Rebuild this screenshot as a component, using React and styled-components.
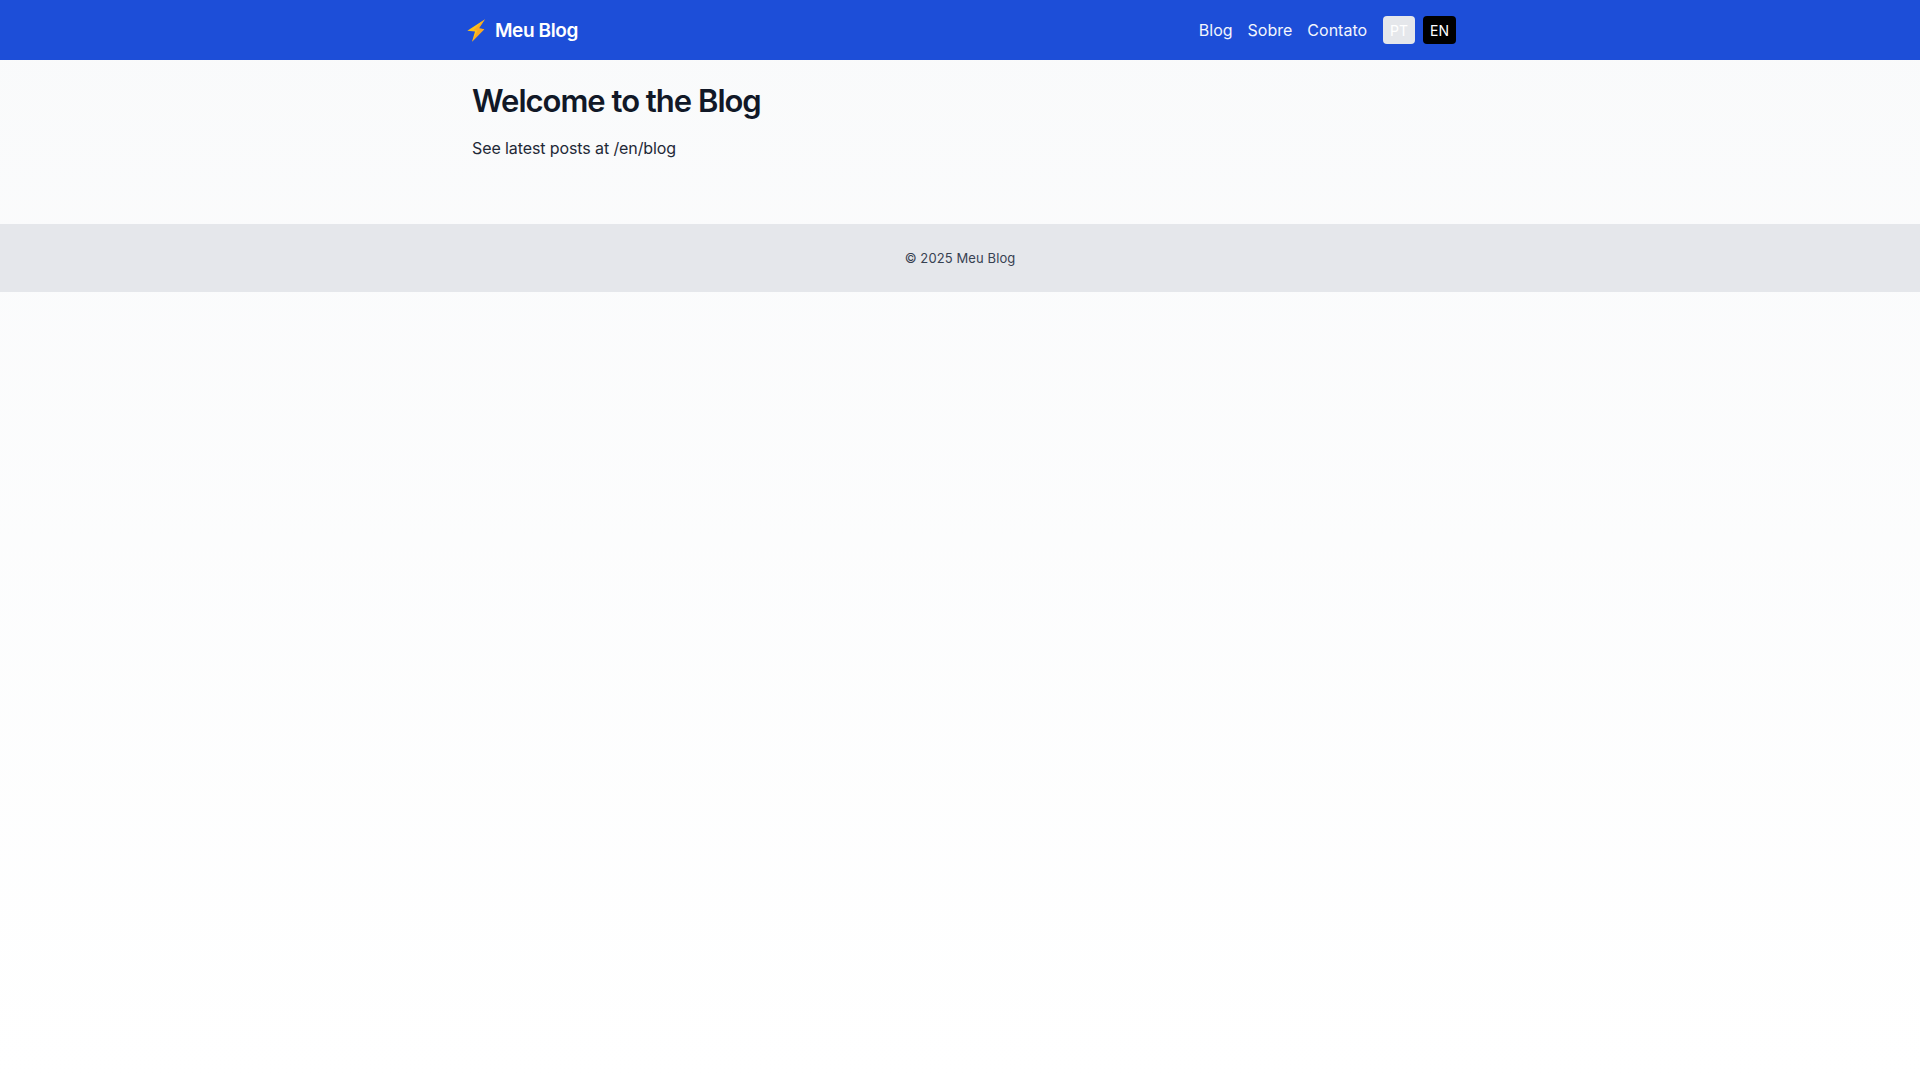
import styled, { createGlobalStyle } from 'styled-components'

const Global = createGlobalStyle`
  html, body { margin: 0; padding: 0; }
  body {
    min-height: 100vh;
    background: linear-gradient(#f9fafb, #ffffff);
    font-family: "Inter", "Noto Sans", sans-serif;
    color: #111827;
  }
`

const Header = styled.header`
  height: 60px;
  background: #1d4ed8;
  color: #fff;
`

const Nav = styled.nav`
  max-width: 992px;
  height: 100%;
  margin: 0 auto;
  display: flex;
  align-items: center;
  justify-content: space-between;
`

const Logo = styled.a`
  display: flex;
  align-items: center;
  gap: 7px;
  font-size: 19px;
  font-weight: 600;
  letter-spacing: -0.4px;
  color: #fff;
`

const Right = styled.div`
  display: flex;
  align-items: center;
  gap: 16px;
`

const Links = styled.div`
  display: flex;
  gap: 15px;
`

const Link = styled.a`
  font-size: 16px;
  color: #fff;
  opacity: 0.95;
`

const Langs = styled.div`
  display: flex;
  gap: 8px;
`

const LangBtn = styled.button`
  height: 28px;
  padding: 0 7px;
  border: none;
  border-radius: 4px;
  font-family: inherit;
  font-size: 14px;
  color: #fff;
  background: ${p => (p.$active ? '#000' : '#e5e7eb')};
`

const Main = styled.main`
  box-sizing: border-box;
  max-width: 1024px;
  height: 164px;
  margin: 0 auto;
  padding: 21px 24px 0;
`

const Title = styled.h1`
  margin: 0 0 15px;
  font-size: 31px;
  line-height: 40px;
  font-weight: 600;
  letter-spacing: -1px;
  color: #111827;
`

const Text = styled.p`
  margin: 0;
  font-size: 16px;
  line-height: 24px;
  letter-spacing: -0.1px;
  color: #1f2937;
`

const Footer = styled.footer`
  height: 68px;
  display: flex;
  align-items: center;
  justify-content: center;
  background: #e5e7eb;
  font-size: 13px;
  letter-spacing: 0.1px;
  color: #374151;
`

function Bolt() {
  return (
    <svg width="24" height="24" viewBox="0 0 24 24">
      <path d="M21 1.3 3.3 12.7l7.7.8L8 23.7l12.3-12.4-5.3-1z" fill="#fcc21b" />
      <path d="M21 1.3 15 10.3l5.3 1L8 23.7l5.6-11.2-4-.4z" fill="#f79329" opacity="0.55" />
    </svg>
  )
}

export default function App() {
  return (
    <>
      <Global />
      <Header>
        <Nav>
          <Logo><Bolt />Meu Blog</Logo>
          <Right>
            <Links>
              <Link>Blog</Link>
              <Link>Sobre</Link>
              <Link>Contato</Link>
            </Links>
            <Langs>
              <LangBtn>PT</LangBtn>
              <LangBtn $active>EN</LangBtn>
            </Langs>
          </Right>
        </Nav>
      </Header>
      <Main>
        <Title>Welcome to the Blog</Title>
        <Text>See latest posts at /en/blog</Text>
      </Main>
      <Footer>© 2025 Meu Blog</Footer>
    </>
  )
}
